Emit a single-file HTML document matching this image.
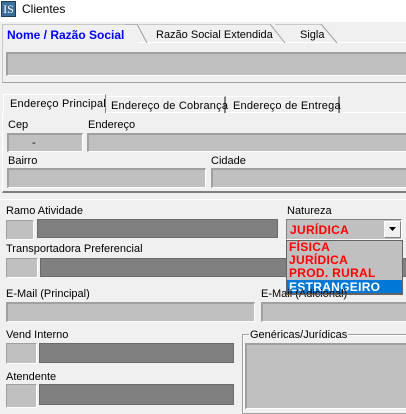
<!DOCTYPE html>
<html><head><meta charset="utf-8"><style>
*{margin:0;padding:0;box-sizing:border-box}
body{width:406px;height:406px;overflow:hidden;background:#f0f0f0;font-family:"Liberation Sans",sans-serif;font-size:11px;color:#000;position:relative}
.a{position:absolute}
.f{position:absolute;background:#c0c0c0;border-top:2px solid #a0a0a0;border-left:2px solid #a0a0a0;border-bottom:1px solid #fff;border-right:1px solid #fff}
.d{position:absolute;background:#808080;border:1px solid #6a6a6a}
.l{position:absolute;white-space:nowrap;line-height:12px}
.r{color:#f00;font-weight:bold;font-size:12px;letter-spacing:0.3px}
</style></head><body>
<div class="a" style="left:0;top:0;width:406px;height:22px;background:#fff"></div>
<div class="a" style="left:1px;top:1px;width:15px;height:16px;background:#3a6f9c;border:1px solid #1d3f5f;color:#fff;font-family:'Liberation Serif',serif;font-size:12px;line-height:14px;text-align:center">IS</div>
<div class="l" style="left:22px;top:3px;font-size:12px">Clientes</div>
<!-- top tabs -->
<div class="a" style="left:2px;top:42px;width:406px;height:41px;border:1px solid #fff;border-right:none;border-bottom:1px solid #a0a0a0;border-left:1px solid #c8c8c8"></div>
<div class="a" style="left:2px;top:24px;width:136px;height:19px;background:#f0f0f0;border-top:1px solid #c8c8c8;border-left:1px solid #c8c8c8"></div>
<svg class="a" style="left:125px;top:24px" width="240" height="20"><path d="M0 0 L12 0 L22 19 M14 0 L145 0 L160 19 M150 0 L196 0 L212 19" fill="none" stroke="#a0a0a0"/></svg>
<div class="l" style="left:7px;top:29px;color:#0000ff;font-weight:bold;font-size:12px">Nome / Razão Social</div>
<div class="l" style="left:156px;top:29px">Razão Social Extendida</div>
<div class="l" style="left:300px;top:29px">Sigla</div>
<div class="f" style="left:6px;top:52px;width:402px;height:24px"></div>
<!-- lower tabs -->
<div class="a" style="left:2px;top:112px;width:406px;height:81px;border-top:1px solid #fff;border-bottom:2px solid #808080;border-left:1px solid #fff"></div>
<div class="a" style="left:3px;top:94px;width:103px;height:19px;background:#f0f0f0;border:1px solid #fff;border-bottom:none;border-right:1px solid #808080"></div>
<div class="a" style="left:107px;top:96px;width:119px;height:17px;border-top:1px solid #fff;border-right:2px solid #808080"></div>
<div class="a" style="left:227px;top:96px;width:113px;height:17px;border-top:1px solid #fff;border-right:2px solid #808080"></div>
<div class="l" style="left:10px;top:98px;font-size:11px;letter-spacing:0.2px">Endereço Principal</div>
<div class="l" style="left:111px;top:100px;font-size:11px;letter-spacing:0.2px">Endereço de Cobrança</div>
<div class="l" style="left:233px;top:100px;font-size:11px;letter-spacing:0.2px">Endereço de Entrega</div>
<div class="l" style="left:8px;top:119px">Cep</div>
<div class="l" style="left:88px;top:119px">Endereço</div>
<div class="f" style="left:7px;top:133px;width:76px;height:19px"></div>
<div class="l" style="left:32px;top:137px">-</div>
<div class="f" style="left:87px;top:133px;width:321px;height:19px"></div>
<div class="l" style="left:8px;top:155px">Bairro</div>
<div class="l" style="left:211px;top:155px">Cidade</div>
<div class="f" style="left:7px;top:168px;width:199px;height:20px"></div>
<div class="f" style="left:211px;top:168px;width:197px;height:20px"></div>
<div class="a" style="left:0;top:199px;width:406px;height:1px;background:#fff"></div>
<!-- ramo -->
<div class="l" style="left:6px;top:205px">Ramo Atividade</div>
<div class="f" style="left:6px;top:220px;width:28px;height:20px;border-width:1px"></div>
<div class="d" style="left:37px;top:219px;width:241px;height:19px"></div>
<div class="l" style="left:287px;top:205px">Natureza</div>
<div class="f" style="left:286px;top:219px;width:116px;height:21px;border-width:1px;border-color:#808080 #fff #fff #808080"></div>
<div class="l r" style="left:290px;top:224px">JURÍDICA</div>
<div class="a" style="left:384px;top:221px;width:17px;height:17px;background:#f0f0f0;border:1px solid #fff;border-right-color:#808080;border-bottom-color:#808080"></div>
<svg class="a" style="left:389px;top:227px" width="8" height="5"><path d="M0 0H7L3.5 4Z" fill="#000"/></svg>
<div class="l" style="left:6px;top:243px">Transportadora Preferencial</div>
<div class="f" style="left:6px;top:258px;width:32px;height:20px;border-width:1px"></div>
<div class="d" style="left:40px;top:258px;width:368px;height:19px"></div>
<!-- dropdown -->
<div class="a" style="left:286px;top:240px;width:117px;height:54px;background:#c0c0c0;border:1px solid #646464"></div>
<div class="a" style="left:287px;top:280px;width:115px;height:13px;background:#0078d7"></div>
<div class="l r" style="left:289px;top:241px">FÍSICA</div>
<div class="l r" style="left:289px;top:254px">JURÍDICA</div>
<div class="l r" style="left:289px;top:267px">PROD. RURAL</div>
<div class="l r" style="left:289px;top:281px;color:#fff">ESTRANGEIRO</div>
<!-- email -->
<div class="l" style="left:6px;top:288px">E-Mail (Principal)</div>
<div class="l" style="left:261px;top:288px">E-Mail (Adicional)</div>
<div class="a" style="left:286px;top:294px;width:117px;height:1px;background:#646464"></div>
<div class="f" style="left:6px;top:302px;width:249px;height:20px"></div>
<div class="f" style="left:261px;top:302px;width:147px;height:20px"></div>
<!-- vend -->
<div class="l" style="left:6px;top:329px">Vend Interno</div>
<div class="f" style="left:6px;top:343px;width:31px;height:21px;border-width:1px"></div>
<div class="d" style="left:39px;top:343px;width:195px;height:20px"></div>
<div class="l" style="left:6px;top:371px">Atendente</div>
<div class="f" style="left:6px;top:384px;width:31px;height:24px;border-width:1px"></div>
<div class="d" style="left:39px;top:384px;width:195px;height:21px"></div>
<div class="a" style="left:242px;top:334px;width:170px;height:80px;border:1px solid #a0a0a0;box-shadow:inset 1px 1px 0 #fff"></div>
<div class="l" style="left:249px;top:329px;background:#f0f0f0;padding:0 1px">Genéricas/Jurídicas</div>
<div class="f" style="left:245px;top:343px;width:163px;height:66px"></div>
</body></html>
